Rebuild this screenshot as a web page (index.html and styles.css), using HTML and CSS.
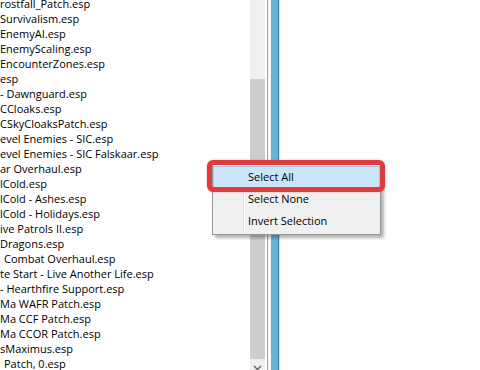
FILE: index.html
```html
<!DOCTYPE html>
<html lang="en">
<head>
    <meta charset="UTF-8">
    <title>Plugin List</title>
    <link rel="stylesheet" href="styles.css">
</head>
<body>
    <div class="window">
        <div class="plugin-list">
            <div class="row">rostfall_Patch.esp</div>
            <div class="row">Survivalism.esp</div>
            <div class="row">EnemyAI.esp</div>
            <div class="row">EnemyScaling.esp</div>
            <div class="row">EncounterZones.esp</div>
            <div class="row">esp</div>
            <div class="row">- Dawnguard.esp</div>
            <div class="row">CCloaks.esp</div>
            <div class="row">CSkyCloaksPatch.esp</div>
            <div class="row">evel Enemies - SIC.esp</div>
            <div class="row">evel Enemies - SIC Falskaar.esp</div>
            <div class="row">ar Overhaul.esp</div>
            <div class="row">lCold.esp</div>
            <div class="row">lCold - Ashes.esp</div>
            <div class="row">lCold - Holidays.esp</div>
            <div class="row">ive Patrols II.esp</div>
            <div class="row">Dragons.esp</div>
            <div class="row indent">Combat Overhaul.esp</div>
            <div class="row">te Start - Live Another Life.esp</div>
            <div class="row">- Hearthfire Support.esp</div>
            <div class="row">Ma WAFR Patch.esp</div>
            <div class="row">Ma CCF Patch.esp</div>
            <div class="row">Ma CCOR Patch.esp</div>
            <div class="row">sMaximus.esp</div>
            <div class="row indent">Patch, 0.esp</div>
        </div>
        <div class="scrollbar">
            <div class="thumb"></div>
            <div class="arrow">
                <svg width="9" height="6" viewBox="0 0 9 6"><path d="M1 1l3.5 3.5L8 1" fill="none" stroke="#606060" stroke-width="1.4"/></svg>
            </div>
        </div>
        <div class="list-border"></div>
        <div class="splitter"><div class="splitter-bar"></div></div>
        <div class="pane"></div>
    </div>

    <div class="context-menu">
        <div class="menu-item active">Select All</div>
        <div class="menu-item">Select None</div>
        <div class="menu-item">Invert Selection</div>
    </div>
    <div class="callout"></div>
</body>
</html>
```

FILE: styles.css
```css
body {
    margin: 0;
    width: 480px;
    height: 370px;
    overflow: hidden;
    background-color: #ffffff;
    font-family: 'Open Sans', 'Noto Sans', sans-serif;
    font-size: 11px;
    color: #000000;
}
.window {
    display: flex;
    height: 370px;
    overflow: hidden;
}
.plugin-list {
    width: 250px;
    margin-top: -4px;
    overflow: hidden;
    white-space: nowrap;
}
.row {
    height: 15px;
    line-height: 15px;
}
.row.indent {
    padding-left: 4px;
}
.scrollbar {
    width: 15px;
    flex-shrink: 0;
    background-color: #f0f0f0;
    padding-top: 79px;
    display: flex;
    flex-direction: column;
}
.thumb {
    height: 280px;
    flex-shrink: 0;
    background-color: #cdcdcd;
}
.arrow {
    height: 17px;
    flex-shrink: 0;
    display: flex;
    justify-content: center;
    align-items: center;
}
.list-border {
    width: 1px;
    margin-left: 2px;
    background-color: #a0a0a0;
}
.splitter {
    width: 12px;
    padding-left: 3px;
    background-color: #f6f8fa;
    box-sizing: border-box;
    flex-shrink: 0;
}
.splitter-bar {
    width: 8px;
    height: 100%;
    background-color: #66b3d9;
    border-right: 1px solid #3f86b6;
    box-sizing: border-box;
    box-shadow: 1px 0 1px rgba(102, 179, 217, 0.3);
}
.pane {
    flex: 1;
}

.context-menu {
    position: absolute;
    left: 212px;
    top: 163px;
    width: 167px;
    padding: 2px 0;
    border: 1px solid #979797;
    background-color: #f0f0f0;
    background-image: linear-gradient(to right, transparent 30px, #e2e3e3 30px, #e2e3e3 31px, #ffffff 31px, #ffffff 32px, transparent 32px);
    box-shadow: 3px 3px 3px rgba(0, 0, 0, 0.3);
    font-size: 11px;
}
.menu-item {
    height: 22px;
    line-height: 21px;
    padding-left: 35px;
    box-sizing: border-box;
}
.menu-item.active {
    background-color: #cce4f7;
    border: 1px solid #a4c8ec;
    padding-left: 34px;
    line-height: 19px;
}
.callout {
    position: absolute;
    left: 207px;
    top: 160px;
    width: 178px;
    height: 32px;
    box-sizing: border-box;
    border: 5px solid #df3a3c;
    border-radius: 6px;
    box-shadow: 0 0 2px rgba(223, 58, 60, 0.45);
}
```
